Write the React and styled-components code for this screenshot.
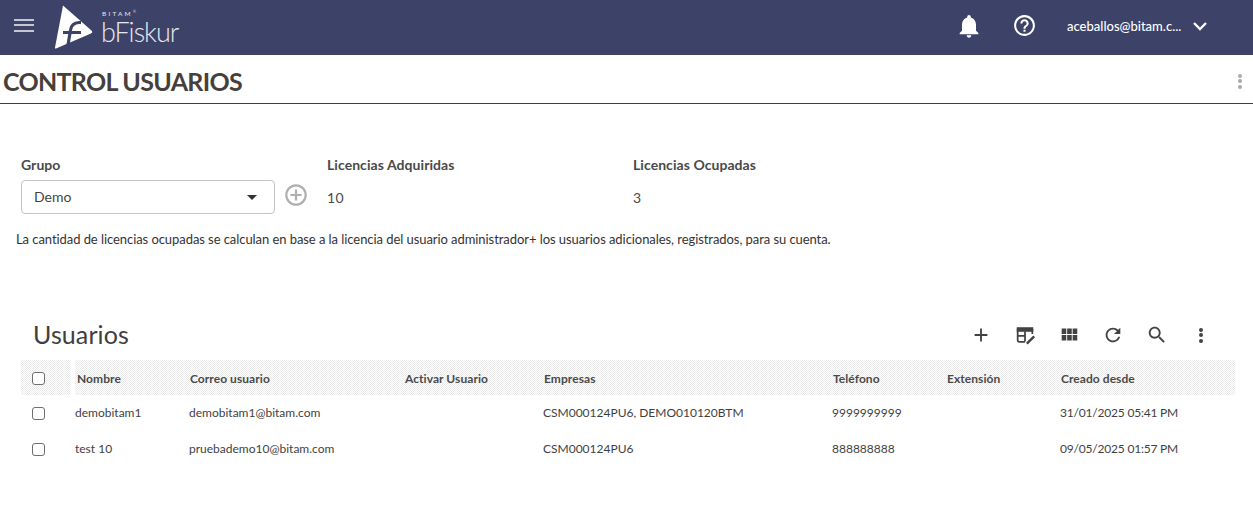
import React from "react";
import styled, { createGlobalStyle } from "styled-components";

const Global = createGlobalStyle`
  html, body { margin: 0; padding: 0; background: #fff; }
  body { font-family: Lato, "Liberation Sans", sans-serif; color: #3f3f3f; }
`;
const Page = styled.div`width: 1253px; height: 519px; overflow: hidden; background: #fff;`;
const Navbar = styled.header`
  height: 55px; background: #3c4268; display: flex; align-items: center; color: #fff;
`;
const Burger = styled.div`
  width: 20px; margin-left: 14px; display: flex; flex-direction: column; gap: 3.5px; margin-top: -5px;
  span { display: block; height: 2px; background: #c4c6d2; }
`;
const LogoMark = styled.svg`width: 40px; height: 46px; margin-left: 20px; flex: none;`;
const Brand = styled.div`
  margin-left: 7px; display: flex; flex-direction: column; color: #e6e7ee; margin-top: -1px;
`;
const BrandTop = styled.span`font-size: 6.5px; letter-spacing: 2.2px; font-weight: 400; line-height: 7px; margin-left: 1px; margin-bottom: 2px; white-space: nowrap;`;
const BrandMark = styled.sup`font-size: 4px; letter-spacing: 0; line-height: 0;`;
const BrandName = styled.span`font-size: 27px; font-weight: 300; line-height: 25px; letter-spacing: -1px;`;
const NavRight = styled.div`margin-left: auto; display: flex; align-items: center; margin-top: -4px;`;
const NavIcon = styled.svg`width: ${p => p.$size}px; height: ${p => p.$size}px; display: block; fill: #fff;`;
const HelpWrap = styled.div`margin-left: 29px;`;
const Email = styled.span`font-size: 13px; font-weight: 500; margin-left: 30px; width: 114px; white-space: nowrap;`;
const Chevron = styled.svg`width: 16px; height: 10px; margin-left: 11px; margin-right: 45px;`;

const TitleBar = styled.div`
  height: 48px; border-bottom: 1px solid #3f3f3f; display: flex; align-items: center; padding-left: 3px; padding-right: 11px;
  justify-content: space-between; box-sizing: content-box;
`;
const Title = styled.h1`margin: 4px 0 0; font-size: 25px; font-weight: 700; color: #46403c; letter-spacing: -0.7px; line-height: 44px;`;
const TitleMenu = styled.div`margin-top: 4px;`;
const Kebab = styled.div`
  display: flex; flex-direction: column; gap: 1.5px;
  span { width: 4px; height: 4px; border-radius: 50%; background: ${p => p.$c}; display: block; }
`;

const GroupRow = styled.div`display: flex; padding-left: 21px; margin-top: 52px;`;
const Label = styled.div`font-size: 14px; font-weight: 700; color: #4a4a4a; line-height: 18px; letter-spacing: 0.06px;`;
const GroupCol = styled.div`width: 306px; flex: none;`;
const SelectLine = styled.div`display: flex; align-items: center; margin-top: 6px;`;
const Select = styled.div`
  width: 254px; height: 34px; border: 1px solid #c4c4c4; border-radius: 4px; display: flex; align-items: center;
  justify-content: space-between; padding: 0 17px 2px 12px; box-sizing: border-box;
  font-size: 14px; color: #444;
`;
const Caret = styled.div`width: 0; height: 0; border-left: 5px solid transparent; border-right: 5px solid transparent; border-top: 5px solid #333; margin-top: 2px;`;
const PlusIcon = styled.svg`width: 24px; height: 24px; margin-left: 9px; margin-top: -4px;`;
const InfoCol = styled.div`width: ${p => p.$w}px; flex: none;`;
const Value = styled.div`font-size: 14px; color: #4a4a4a; margin-top: 15px; line-height: 18px; letter-spacing: 0.3px;`;
const Note = styled.p`margin: 16px 0 0 16px; font-size: 13px; line-height: 18px; color: #333; letter-spacing: -0.065px;`;

const UsersHead = styled.div`
  display: flex; align-items: center; justify-content: space-between; margin-top: 71px; padding-left: 33px; height: 32px; padding-right: 41px;
`;
const UsersTitle = styled.h2`margin: 0; padding-bottom: 2px; font-size: 25px; font-weight: 400; color: #3f3f3f; line-height: 30px; letter-spacing: 0.1px;`;
const Tools = styled.div`display: flex; align-items: center; gap: 22px;`;
const ToolIcon = styled.svg`width: 22px; height: 22px; display: block; fill: #424242;`;
const KebabTool = styled.div`width: 22px; display: flex; justify-content: center;`;

const Table = styled.div`margin: 9px 18px 0 21px; font-size: 12px; color: #444;`;
const HeadRow = styled.div`
  height: 35px; display: grid; grid-template-columns: 50px 4px 115px 215px 139px 289px 114px 114px 1fr; align-items: center;
  background: repeating-conic-gradient(#ebebeb 0 25%, #fff 0 50%) 0 0 / 2px 2px;
  font-weight: 700; font-size: 12px; color: #4a4a4a; letter-spacing: 0.06px;
`;
const HeadCheck = styled.div`height: 35px; display: flex; align-items: center; padding: 2px 0 0 11px; box-sizing: border-box;`;
const HeadGap = styled.div`height: 35px; background: #fff;`;
const HeadCell = styled.div`padding-left: ${p => p.$pl}px; margin-top: 2px; white-space: nowrap;`;
const Row = styled.div`
  height: 36px; display: grid; grid-template-columns: 54px 114px 215px 139px 289px 114px 114px 1fr; align-items: center;
  font-size: 12px; color: #3f3f3f;
`;
const CheckCell = styled.div`padding-left: 11px; display: flex;`;
const Check = styled.span`width: 11px; height: 11px; border: 1px solid #6e6e6e; border-radius: 3px; background: #fff; display: block;`;
const Cell = styled.div`white-space: nowrap; margin-top: -2px; letter-spacing: ${p => p.$tight ? "-0.2px" : "0"};`;

const rows = [
  ["demobitam1", "demobitam1@bitam.com", "", "CSM000124PU6, DEMO010120BTM", "9999999999", "", "31/01/2025 05:41 PM"],
  ["test 10", "pruebademo10@bitam.com", "", "CSM000124PU6", "888888888", "", "09/05/2025 01:57 PM"],
];
const heads = ["Nombre", "Correo usuario", "Activar Usuario", "Empresas", "Teléfono", "Extensión", "Creado desde"];

export default function App() {
  return (
    <Page>
      <Global />
      <Navbar>
        <Burger><span /><span /><span /></Burger>
        <LogoMark viewBox="0 0 40 46">
          <path d="M9 0.5 L38 26 Q39 27.5 37 28.5 L2 43.5 Q1 44 1 42.5 Z" fill="#fff" />
          <path d="M14 40 L16.5 25 Q17.5 18 25 17.5 L27 17.5 M9 27.5 L27 27.5" stroke="#3c4268" strokeWidth="3.2" fill="none" />
        </LogoMark>
        <Brand>
          <BrandTop>BITAM<BrandMark>®</BrandMark></BrandTop>
          <BrandName>bFiskur</BrandName>
        </Brand>
        <NavRight>
          <NavIcon $size={28} viewBox="0 0 24 24"><path d="M12 22c1.1 0 2-.9 2-2h-4c0 1.1.9 2 2 2zm6-6v-5c0-3.07-1.63-5.64-4.5-6.32V4c0-.83-.67-1.5-1.5-1.5s-1.5.67-1.5 1.5v.68C7.64 5.36 6 7.92 6 11v5l-2 2v1h16v-1l-2-2z" /></NavIcon>
          <HelpWrap>
            <NavIcon $size={25} viewBox="0 0 24 24"><path d="M11 18h2v-2h-2v2zm1-16C6.48 2 2 6.48 2 12s4.48 10 10 10 10-4.48 10-10S17.52 2 12 2zm0 18c-4.41 0-8-3.59-8-8s3.59-8 8-8 8 3.59 8 8-3.59 8-8 8zm0-14c-2.21 0-4 1.79-4 4h2c0-1.1.9-2 2-2s2 .9 2 2c0 2-3 1.75-3 5h2c0-2.25 3-2.5 3-5 0-2.21-1.79-4-4-4z" /></NavIcon>
          </HelpWrap>
          <Email>aceballos@bitam.c...</Email>
          <Chevron viewBox="0 0 16 10"><path d="M2 2l6 6 6-6" stroke="#fff" strokeWidth="2.4" fill="none" /></Chevron>
        </NavRight>
      </Navbar>
      <TitleBar>
        <Title>CONTROL USUARIOS</Title>
        <TitleMenu><Kebab $c="#aaa"><span /><span /><span /></Kebab></TitleMenu>
      </TitleBar>
      <GroupRow>
        <GroupCol>
          <Label>Grupo</Label>
          <SelectLine>
            <Select>Demo<Caret /></Select>
            <PlusIcon viewBox="0 0 24 24"><circle cx="12" cy="12" r="9.7" stroke="#b0b0b0" strokeWidth="2.2" fill="none" /><path d="M12 6.5v11M6.5 12h11" stroke="#b0b0b0" strokeWidth="2.2" /></PlusIcon>
          </SelectLine>
        </GroupCol>
        <InfoCol $w={306}><Label>Licencias Adquiridas</Label><Value>10</Value></InfoCol>
        <InfoCol $w={300}><Label>Licencias Ocupadas</Label><Value>3</Value></InfoCol>
      </GroupRow>
      <Note>La cantidad de licencias ocupadas se calculan en base a la licencia del usuario administrador+ los usuarios adicionales, registrados, para su cuenta.</Note>
      <UsersHead>
        <UsersTitle>Usuarios</UsersTitle>
        <Tools>
          <ToolIcon viewBox="0 0 24 24"><path d="M19 13h-6v6h-2v-6H5v-2h6V5h2v6h6v2z" /></ToolIcon>
          <ToolIcon viewBox="0 0 24 24">
            <path d="M3 3.5h18v5H3z" />
            <path d="M12 19.5H6a2 2 0 0 1-2-2V5M20 5v6M4 13h9M12 8v11" stroke="#424242" strokeWidth="1.9" fill="none" />
            <path d="M14 21.5l8-8" stroke="#424242" strokeWidth="2.6" fill="none" />
          </ToolIcon>
          <ToolIcon viewBox="0 0 24 24"><path d="M4 5h5v6H4zM10 5h5v6h-5zM16 5h5v6h-5zM4 12h5v6H4zM10 12h5v6h-5zM16 12h5v6h-5z" /></ToolIcon>
          <ToolIcon viewBox="0 0 24 24"><path d="M17.65 6.35C16.2 4.9 14.21 4 12 4c-4.42 0-7.99 3.58-7.99 8s3.57 8 7.99 8c3.73 0 6.84-2.55 7.73-6h-2.08c-.82 2.33-3.04 4-5.65 4-3.31 0-6-2.69-6-6s2.69-6 6-6c1.66 0 3.14.69 4.22 1.78L13 11h7V4l-2.35 2.35z" /></ToolIcon>
          <ToolIcon viewBox="0 0 24 24"><path d="M15.5 14h-.79l-.28-.27C15.41 12.59 16 11.11 16 9.5 16 5.91 13.09 3 9.5 3S3 5.91 3 9.5 5.91 16 9.5 16c1.61 0 3.09-.59 4.23-1.57l.27.28v.79l5 4.99L20.49 19l-4.99-5zm-6 0C7.01 14 5 11.99 5 9.5S7.01 5 9.5 5 14 7.01 14 9.5 11.99 14 9.5 14z" /></ToolIcon>
          <KebabTool><Kebab $c="#424242"><span /><span /><span /></Kebab></KebabTool>
        </Tools>
      </UsersHead>
      <Table>
        <HeadRow>
          <HeadCheck><Check /></HeadCheck>
          <HeadGap />
          {heads.map((h, i) => <HeadCell key={h} $pl={i === 0 ? 2 : 0}>{h}</HeadCell>)}
        </HeadRow>
        {rows.map((r, i) => (
          <Row key={i}>
            <CheckCell><Check /></CheckCell>
            {r.map((c, j) => <Cell key={j} $tight={j === 6}>{c}</Cell>)}
          </Row>
        ))}
      </Table>
    </Page>
  );
}
